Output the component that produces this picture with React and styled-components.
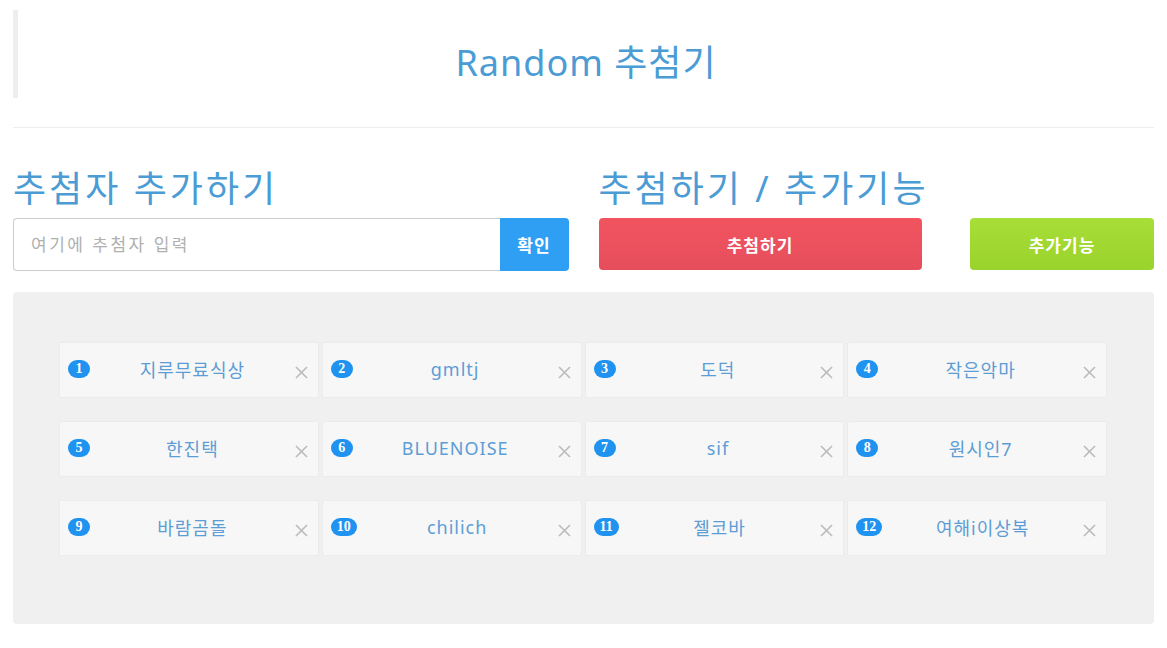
import React from 'react';
import styled, { createGlobalStyle } from 'styled-components';

const GlobalStyle = createGlobalStyle`
  body {
    margin: 0;
    background: #fff;
    font-family: "Noto Sans", "Noto Sans CJK KR", sans-serif;
  }
`;

const Page = styled.div`
  padding: 10px 13px 25px;
`;

const Header = styled.div`
  height: 88px;
  border-left: 5px solid #eeeeee;
  display: flex;
  align-items: center;
  justify-content: center;
`;

const Title = styled.h1`
  margin: 0;
  padding-top: 12px;
  font-size: 36px;
  font-weight: 400;
  letter-spacing: 1px;
  color: #4b9cd5;
`;

const Divider = styled.hr`
  margin: 29px 0 0;
  border: 0;
  border-top: 1px solid #eeeeee;
`;

const Sections = styled.div`
  display: grid;
  grid-template-columns: 1fr 1fr;
  column-gap: 30px;
  margin-top: 36px;
`;

const Section = styled.div`
  display: flex;
  flex-direction: column;
`;

const Heading = styled.h2`
  margin: 0 0 4px;
  font-size: 36px;
  font-weight: 400;
  line-height: 50px;
  letter-spacing: 3px;
  color: #4b9cd5;
`;

const InputGroup = styled.div`
  display: flex;
  height: 53px;
`;

const Input = styled.input`
  flex: 1;
  min-width: 0;
  border: 1px solid #cccccc;
  border-right: 0;
  border-radius: 4px 0 0 4px;
  padding: 0 17px;
  font-family: inherit;
  font-size: 17px;
  letter-spacing: 2.5px;
  outline: none;
  &::placeholder {
    color: #b0b0b0;
  }
`;

const Button = styled.button`
  border: 0;
  border-radius: ${(p) => (p.$joined ? '0 4px 4px 0' : '4px')};
  background: ${(p) => p.$bg};
  color: #fff;
  font-family: inherit;
  font-size: 17px;
  font-weight: 700;
  letter-spacing: 1px;
  cursor: pointer;
  width: ${(p) => p.$width};
  height: ${(p) => p.$height || '53px'};
`;

const ActionRow = styled.div`
  display: flex;
  justify-content: space-between;
`;

const Panel = styled.div`
  margin-top: 21px;
  background: #f0f0f0;
  border-radius: 4px;
  padding: 50px 47px 68px 46px;
  display: grid;
  grid-template-columns: repeat(4, 1fr);
  gap: 23px 3px;
`;

const Card = styled.div`
  height: 56px;
  box-sizing: border-box;
  background: #f7f7f7;
  border: 1px solid #ececec;
  border-radius: 2px;
  display: flex;
  align-items: center;
  padding: 0 10px 0 8px;
`;

const Badge = styled.span`
  min-width: 22px;
  height: 18px;
  box-sizing: border-box;
  padding: 0 6px;
  border-radius: 9px;
  background: #1f93ef;
  color: #fff;
  font-family: "Liberation Serif", serif;
  font-weight: 700;
  font-size: 14px;
  line-height: 18px;
  text-align: center;
  margin-top: -2px;
`;

const Name = styled.span`
  flex: 1;
  text-align: center;
  font-size: 18px;
  letter-spacing: 1px;
  color: #5d9dd5;
  margin-top: -2px;
`;

const Remove = styled.svg`
  width: 13px;
  height: 13px;
  margin-top: 5px;
  stroke: #bdbdbd;
  stroke-width: 1.7;
`;

const names = [
  '지루무료식상',
  'gmltj',
  '도덕',
  '작은악마',
  '한진택',
  'BLUENOISE',
  'sif',
  '원시인7',
  '바람곰돌',
  'chilich',
  '젤코바',
  '여해i이상복',
];

export default function App() {
  return (
    <Page>
      <GlobalStyle />
      <Header>
        <Title>Random 추첨기</Title>
      </Header>
      <Divider />
      <Sections>
        <Section>
          <Heading>추첨자 추가하기</Heading>
          <InputGroup>
            <Input placeholder="여기에 추첨자 입력" />
            <Button $joined $bg="#2e9ff2" $width="69px">확인</Button>
          </InputGroup>
        </Section>
        <Section>
          <Heading>추첨하기 / 추가기능</Heading>
          <ActionRow>
            <Button $bg="linear-gradient(#f1545f, #e64e5c)" $width="323px" $height="52px">추첨하기</Button>
            <Button $bg="linear-gradient(#a7de37, #9ad32c)" $width="184px" $height="52px">추가기능</Button>
          </ActionRow>
        </Section>
      </Sections>
      <Panel>
        {names.map((n, i) => (
          <Card key={n}>
            <Badge>{i + 1}</Badge>
            <Name>{n}</Name>
            <Remove viewBox="0 0 13 13">
              <line x1="1" y1="1" x2="12" y2="12" />
              <line x1="12" y1="1" x2="1" y2="12" />
            </Remove>
          </Card>
        ))}
      </Panel>
    </Page>
  );
}
